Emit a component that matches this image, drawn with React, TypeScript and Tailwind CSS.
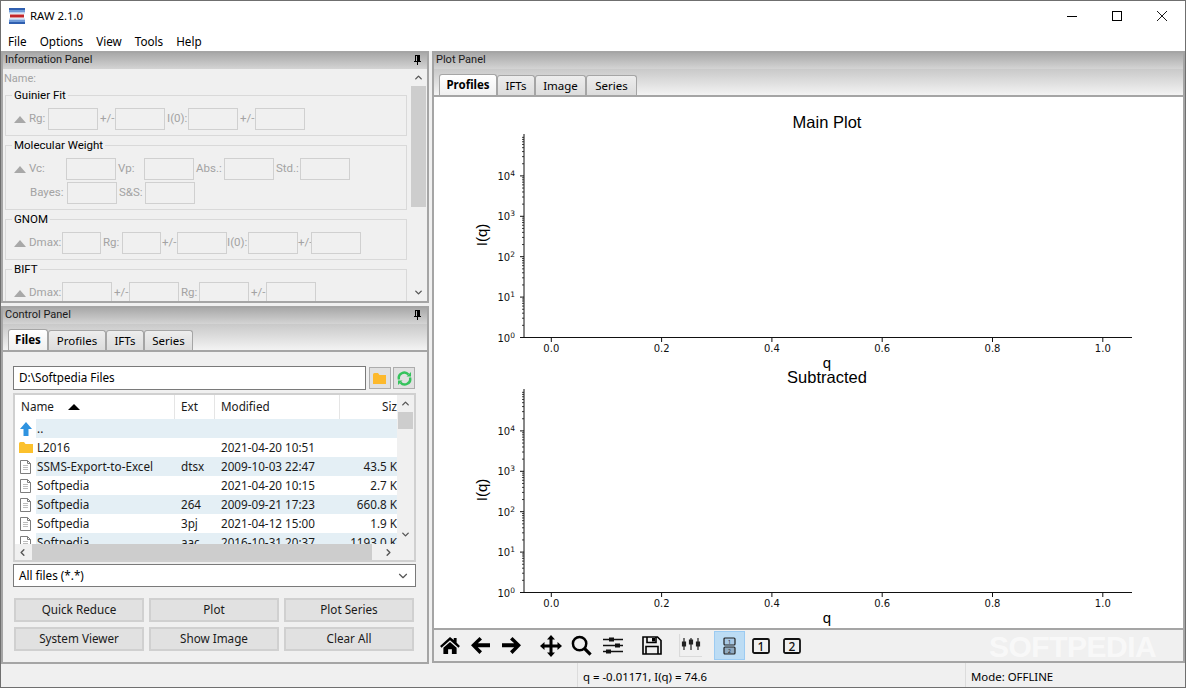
import { ChevronDown, ChevronLeft, ChevronRight, ChevronUp } from 'lucide-react';
import { ReactNode } from 'react';

const UI_FONT = "font-['Noto_Sans','Open_Sans',sans-serif]";

function PinIcon() {
  return (
    <svg width="7" height="10" viewBox="0 0 7 10" className="mb-[2px]">
      <path d="M1 0H6V6H7V7H4V10H3V7H0V6H1ZM2 1V6H3V1Z" fill="#000" />
    </svg>
  );
}

function DockHeader({ title, pin = true }: { title: string; pin?: boolean }) {
  return (
    <div className="flex h-4 shrink-0 items-center justify-between bg-gradient-to-b from-[#a9a9a9] to-[#d4d4d4] pl-[2px] pr-[6px] font-['Roboto',sans-serif] text-[11px] leading-none text-[#1a1a1a]">
      <span className="mb-[3px]">{title}</span>
      {pin && <PinIcon />}
    </div>
  );
}

function Tabs({ tabs, bold }: { tabs: [string, number][]; bold: string }) {
  return (
    <div className="flex h-7 shrink-0 items-end border-b-2 border-[#a5a5a5] bg-gradient-to-b from-[#c9c9c9] to-[#f3f3f3] pl-[5px]">
      {tabs.map(([t, w]) => (
        <div
          key={t}
          style={{ width: w }}
          className={
            t === bold
              ? 'flex h-[21px] items-center justify-center rounded-t-[3px] border border-b-0 border-[#a5a5a5] bg-gradient-to-b from-white to-[#f0f0f0] text-[11.5px] font-bold'
              : 'flex h-[20px] items-center justify-center rounded-t-[3px] border border-b-0 border-[#a5a5a5] bg-gradient-to-b from-[#ededed] to-[#dcdcdc] text-[11.5px]'
          }
        >
          {t}
        </div>
      ))}
    </div>
  );
}

function Tri() {
  return <span className="mr-[3px] h-0 w-0 border-x-[6.5px] border-b-[7px] border-x-transparent border-b-[#a8a8a8]" />;
}

function Lbl({ w, children }: { w?: number; children: ReactNode }) {
  return (
    <span style={{ width: w }} className="shrink-0 font-['Roboto',sans-serif] text-[11.5px] leading-none text-[#a3a3a3]">
      {children}
    </span>
  );
}

function Box({ w = 50, gap = 2 }: { w?: number; gap?: number }) {
  return <span style={{ width: w, marginRight: gap }} className="h-[22px] shrink-0 border border-[#d0d0d0] bg-[#f0f0f0]" />;
}

function Group({ title, children }: { title: string; children: ReactNode }) {
  return (
    <div className="relative mb-[9px] ml-[2px] mr-[3px] border border-[#d9d9d9] pb-[5px] pl-2 pt-[12px]">
      <span className="absolute -top-[9px] left-[6px] bg-[#f0f0f0] px-[2px] font-['Roboto',sans-serif] text-[11.5px] leading-4 text-black">{title}</span>
      {children}
    </div>
  );
}

function InfoPanel() {
  return (
    <div className="flex h-[252px] shrink-0 flex-col border-2 border-[#a5a5a5]">
      <DockHeader title="Information Panel" />
      <div className="flex min-h-0 flex-1">
        <div className="min-w-0 flex-1 overflow-hidden">
          <div className="mb-[10px] pl-px pt-1 font-['Roboto',sans-serif] text-[11px] leading-3 text-[#a3a3a3]">Name:</div>
          <Group title="Guinier Fit">
            <div className="flex items-center">
              <Tri />
              <Lbl w={19}>Rg:</Lbl>
              <Box />
              <Lbl w={15}>+/-</Lbl>
              <Box />
              <Lbl w={21}>I(0):</Lbl>
              <Box />
              <Lbl w={15}>+/-</Lbl>
              <Box />
            </div>
          </Group>
          <Group title="Molecular Weight">
            <div className="flex items-center">
              <Tri />
              <Lbl w={37}>Vc:</Lbl>
              <Box />
              <Lbl w={26}>Vp:</Lbl>
              <Box />
              <Lbl w={28}>Abs.:</Lbl>
              <Box />
              <Lbl w={24}>Std.:</Lbl>
              <Box />
            </div>
            <div className="mt-0.5 flex items-center pl-4">
              <Lbl w={37}>Bayes:</Lbl>
              <Box />
              <Lbl w={26}>S&amp;S:</Lbl>
              <Box />
            </div>
          </Group>
          <Group title="GNOM">
            <div className="flex items-center">
              <Tri />
              <Lbl w={33}>Dmax:</Lbl>
              <Box w={39} />
              <Lbl w={19}>Rg:</Lbl>
              <Box w={39} gap={1} />
              <Lbl w={15}>+/-</Lbl>
              <Box gap={0} />
              <Lbl w={21}>I(0):</Lbl>
              <Box gap={0} />
              <Lbl w={13}>+/-</Lbl>
              <Box />
            </div>
          </Group>
          <Group title="BIFT">
            <div className="flex items-center">
              <Tri />
              <Lbl w={33}>Dmax:</Lbl>
              <Box />
              <Lbl w={15}>+/-</Lbl>
              <Box />
              <Lbl w={18}>Rg:</Lbl>
              <Box />
              <Lbl w={15}>+/-</Lbl>
              <Box />
            </div>
          </Group>
        </div>
        <div className="flex w-[17px] shrink-0 flex-col items-center bg-[#f0f0f0]">
          <ChevronUp size={11} strokeWidth={3} className="mt-[3px] h-[11px] shrink-0 text-[#555]" />
          <div className="mt-[3px] h-[121px] w-[15px] bg-[#cdcdcd]" />
          <div className="flex-1" />
          <ChevronDown size={11} strokeWidth={3} className="mb-[3px] shrink-0 text-[#555]" />
        </div>
      </div>
    </div>
  );
}

const FILES: [string, string, string, string, 'up' | 'folder' | 'file'][] = [
  ['..', '', '', '', 'up'],
  ['L2016', '', '2021-04-20 10:51', '', 'folder'],
  ['SSMS-Export-to-Excel', 'dtsx', '2009-10-03 22:47', '43.5 K', 'file'],
  ['Softpedia', '', '2021-04-20 10:15', '2.7 K', 'file'],
  ['Softpedia', '264', '2009-09-21 17:23', '660.8 K', 'file'],
  ['Softpedia', '3pj', '2021-04-12 15:00', '1.9 K', 'file'],
  ['Softpedia', 'aac', '2016-10-31 20:37', '1193.0 K', 'file'],
];

function FileIcon({ kind }: { kind: 'up' | 'folder' | 'file' }) {
  if (kind === 'up') {
    return (
      <svg width="12" height="14" viewBox="0 0 12 14">
        <path d="M6 0 12 7H8.5V14H3.5V7H0Z" fill="#2f93e0" />
      </svg>
    );
  }
  if (kind === 'folder') {
    return (
      <svg width="14" height="11" viewBox="0 0 14 11">
        <path d="M0 1.5Q0 0 1.5 0H5L6.5 2H14V11H0Z" fill="#fcc12d" />
      </svg>
    );
  }
  return (
    <svg width="11" height="14" viewBox="0 0 11 14" fill="none" stroke="#7d7d7d">
      <path d="M.5.5H7.5L10.5 3.5V13.5H.5Z" fill="#fff" />
      <path d="M7.5.5V3.5H10.5" />
      <path d="M3 5.5H8M3 7.5H8M3 9.5H8" stroke="#bdbdbd" />
    </svg>
  );
}

function FileList() {
  return (
    <div className="ml-[10px] mr-[11px] mt-[3px] h-[169px] shrink-0 border-2 border-[#d0d0d0] bg-white">
      <div className="flex h-full">
        <div className="flex min-w-0 flex-1 flex-col">
          <div className="min-h-0 flex-1 overflow-hidden text-[11.7px] leading-none text-[#1a1a1a]">
            <div className="flex h-6 items-center">
              <div className="flex h-full w-[160px] items-center border-r border-[#e5e5e5] pl-[6px]">
                Name
                <span className="ml-[14px] h-0 w-0 border-x-[6.5px] border-b-[6px] border-x-transparent border-b-black" />
              </div>
              <div className="flex h-full w-[40px] items-center border-r border-[#e5e5e5] pl-[6px]">Ext</div>
              <div className="flex h-full w-[125px] items-center border-r border-[#e5e5e5] pl-[6px]">Modified</div>
              <div className="flex h-full flex-1 items-center justify-end overflow-hidden">Siz</div>
            </div>
            {FILES.map(([name, ext, date, size, kind], i) => (
              <div key={i} className="flex h-[19px] items-center">
                <div className="flex h-full w-[21px] shrink-0 items-center justify-center bg-white">
                  <FileIcon kind={kind} />
                </div>
                <div className={i % 2 === 0 ? 'flex h-full flex-1 items-center bg-[#e4eff5]' : 'flex h-full flex-1 items-center'}>
                  <span className="w-[145px] shrink-0 pl-px">{name}</span>
                  <span className="w-[40px] shrink-0">{ext}</span>
                  <span className="w-[110px] shrink-0">{date}</span>
                  <span className="flex-1 text-right">{size}</span>
                </div>
              </div>
            ))}
          </div>
          <div className="flex h-[16px] shrink-0 items-center bg-[#f0f0f0]">
            <ChevronLeft size={11} strokeWidth={3} className="mx-[2px] shrink-0 text-[#555]" />
            <div className="ml-[2px] h-full w-[340px] bg-[#cdcdcd]" />
            <div className="flex-1" />
            <ChevronRight size={11} strokeWidth={3} className="mr-[3px] shrink-0 text-[#555]" />
          </div>
        </div>
        <div className="flex w-[17px] shrink-0 flex-col items-center bg-[#f0f0f0]">
          <ChevronUp size={11} strokeWidth={3} className="mt-[3px] shrink-0 text-[#555]" />
          <div className="mt-[3px] h-[17px] w-[15px] bg-[#cdcdcd]" />
          <div className="flex-1" />
          <ChevronDown size={11} strokeWidth={3} className="mb-[20px] shrink-0 text-[#555]" />
        </div>
      </div>
    </div>
  );
}

function Btn({ children }: { children: ReactNode }) {
  return (
    <div className="flex h-6 w-[130px] items-center justify-center border-2 border-[#d0d0d0] bg-[#e1e1e1] text-[11.7px] leading-none text-[#1a1a1a]">
      {children}
    </div>
  );
}

function ControlPanel() {
  return (
    <div className="flex h-[358px] shrink-0 flex-col border-2 border-[#a5a5a5]">
      <DockHeader title="Control Panel" />
      <Tabs
        bold="Files"
        tabs={[
          ['Files', 40],
          ['Profiles', 58],
          ['IFTs', 38],
          ['Series', 49],
        ]}
      />
      <div className="flex min-h-0 flex-1 flex-col">
        <div className="ml-[10px] mr-[12px] mt-[14px] flex items-center">
          <div className="flex h-6 flex-1 items-center border border-[#7a7a7a] bg-white pl-[5px] text-[11.7px] leading-none">D:\Softpedia Files</div>
          <div className="ml-[3px] flex h-[22px] w-[22px] items-center justify-center border border-[#adadad] bg-[#e1e1e1]">
            <svg width="14" height="11" viewBox="0 0 14 11">
              <path d="M0 1.5Q0 0 1.5 0H5L6.5 2H13V11H0Z" fill="#fdb92c" />
            </svg>
          </div>
          <div className="ml-0.5 flex h-[22px] w-[22px] items-center justify-center border border-[#adadad] bg-[#e1e1e1]">
            <svg width="15" height="15" viewBox="0 0 15 15" fill="none" stroke="#35c35c" strokeWidth="2.4">
              <path d="M2 8.5A5.5 5.5 0 0 1 11.5 3.5M13 6.5A5.5 5.5 0 0 1 3.5 11.5" />
              <path d="M9.5 5.5H14V1ZM5.5 9.5H1V14Z" fill="#35c35c" stroke="none" />
            </svg>
          </div>
        </div>
        <FileList />
        <div className="ml-[10px] mr-[11px] mt-0.5 flex h-[23px] items-center justify-between border border-[#7a7a7a] bg-white pl-[5px] pr-[5px] text-[11.7px] leading-none">
          All files (*.*)
          <ChevronDown size={14} className="text-[#555]" />
        </div>
        <div className="mt-[11px] grid grid-cols-[130px_130px_130px] gap-x-[5px] gap-y-[5px] pl-[11px]">
          <Btn>Quick Reduce</Btn>
          <Btn>Plot</Btn>
          <Btn>Plot Series</Btn>
          <Btn>System Viewer</Btn>
          <Btn>Show Image</Btn>
          <Btn>Clear All</Btn>
        </div>
      </div>
    </div>
  );
}

const Y_DECADES = [0, 1, 2, 3, 4];
const X_TICKS = ['0.0', '0.2', '0.4', '0.6', '0.8', '1.0'];
const TICK_FONT = "'DejaVu Sans', sans-serif";

// log minor ticks: 2..9 within each decade, up to the top of the spine
function minorTicks(y0: number, dec: number) {
  const out: number[] = [];
  for (let d = 0; d < 5; d++) {
    for (let m = 2; m <= 9; m++) out.push(y0 - (d + Math.log10(m)) * dec);
  }
  return out;
}

function LogPlot({ title }: { title: string }) {
  const y0 = 240.5;
  const dec = 40.4;
  const xs = X_TICKS.map((_, i) => 117.3 + i * 110.3);
  return (
    <svg width="750" height="265" viewBox="0 0 750 265" className="block overflow-visible font-['Liberation_Sans',sans-serif]">
      <text x="393" y="31" textAnchor="middle" fontSize="16.5" fill="#000">
        {title}
      </text>
      <path d="M90 37V240.5H698" fill="none" stroke="#111" />
      {Y_DECADES.map((d) => (
        <g key={d}>
          <path d={`M86 ${y0 - d * dec}H90`} stroke="#111" />
          <text x="81" y={y0 - d * dec + 4} textAnchor="end" fontSize="10" fontFamily={TICK_FONT} fill="#111">
            10
            <tspan dy="-4" fontSize="7.5">
              {d}
            </tspan>
          </text>
        </g>
      ))}
      {minorTicks(y0, dec)
        .filter((y) => y > 37)
        .map((y) => (
          <path key={y} d={`M88 ${y}H90`} stroke="#111" strokeWidth="0.8" />
        ))}
      {xs.map((x, i) => (
        <g key={x}>
          <path d={`M${x} 241V245`} stroke="#111" />
          <text x={x} y="255" textAnchor="middle" fontSize="10" fontFamily={TICK_FONT} fill="#111">
            {X_TICKS[i]}
          </text>
        </g>
      ))}
      <text x="393" y="271" textAnchor="middle" fontSize="15">
        q
      </text>
      <text transform="rotate(-90 53 138)" x="53" y="138" textAnchor="middle" fontSize="15">
        I(q)
      </text>
    </svg>
  );
}

function ToolIcon({ children, active }: { children: ReactNode; active?: boolean }) {
  return (
    <div className={active ? 'flex h-[29px] w-[31px] items-center justify-center border border-[#9ccbf2] bg-[#bcdcf4]' : 'flex h-7 w-[31px] items-center justify-center'}>
      {children}
    </div>
  );
}

function Toolbar() {
  return (
    <div className="relative flex h-[33px] shrink-0 items-center border-t-2 border-[#a5a5a5]">
      <ToolIcon>
        <svg width="20" height="17" viewBox="0 0 21 18">
          <path d="M10.5 0 0 9.5 1.5 11.5 10.5 3.5 19.5 11.5 21 9.5 17.5 6V1H14.5V3.3Z" />
          <path d="M3.5 11.5 10.5 5.2 17.5 11.5V18H12.5V13H8.5V18H3.5Z" />
        </svg>
      </ToolIcon>
      <ToolIcon>
        <svg width="19" height="17" viewBox="0 0 19 17">
          <path d="M8.5 0 11 2.5 6.8 6.3H19V10.3H6.8L11 14.2 8.5 17 0 8.3Z" />
        </svg>
      </ToolIcon>
      <ToolIcon>
        <svg width="19" height="17" viewBox="0 0 19 17">
          <path d="M10.5 0 8 2.5 12.2 6.3H0V10.3H12.2L8 14.2 10.5 17 19 8.3Z" />
        </svg>
      </ToolIcon>
      <div className="w-2" />
      <ToolIcon>
        <svg width="22" height="22" viewBox="0 0 22 22">
          <path d="M11 0 15 4.5H12.5V9.5H17.5V7L22 11 17.5 15V12.5H12.5V17.5H15L11 22 7 17.5H9.5V12.5H4.5V15L0 11 4.5 7V9.5H9.5V4.5H7Z" />
        </svg>
      </ToolIcon>
      <ToolIcon>
        <svg width="21" height="21" viewBox="0 0 22 22" fill="none" stroke="#000">
          <circle cx="9" cy="9" r="7" strokeWidth="2.6" />
          <path d="M14 14 20.5 20.5" strokeWidth="3.4" />
        </svg>
      </ToolIcon>
      <ToolIcon>
        <svg width="20" height="17" viewBox="0 0 20 17" fill="none" stroke="#111" strokeWidth="1.6">
          <path d="M0 2.5H20M0 8.5H20M0 14.5H20" />
          <path d="M6 .5H11V4.5H6ZM12 6.5H17V10.5H12ZM3 12.5H8V16.5H3Z" fill="#111" stroke="none" />
        </svg>
      </ToolIcon>
      <div className="w-2" />
      <ToolIcon>
        <svg width="20" height="19" viewBox="0 0 20 19" fill="none" stroke="#000" strokeWidth="1.6">
          <path d="M1 1H15.5L19 4.5V18H1Z" />
          <path d="M5 1V6.5H14V1" />
          <path d="M4 18V10.5H16V18" />
          <path d="M10 2H13V5.5H10Z" fill="#000" stroke="none" />
        </svg>
      </ToolIcon>
      <div className="w-2" />
      <ToolIcon>
        <svg width="23" height="23" viewBox="0 0 23 23" fill="none" stroke="#222" strokeWidth="1.2">
          <path d="M.5 .5V22.5H23" stroke="#c4c4c4" strokeDasharray="1 1" />
          <path d="M5 4V16M12 4V16M19 4V16" />
          <path d="M3.5 8H6.5V12H3.5ZM10.5 6H13.5V10H10.5ZM17.5 8H20.5V12H17.5Z" fill="#222" />
        </svg>
      </ToolIcon>
      <div className="w-2" />
      <ToolIcon active>
        <svg width="13" height="18" viewBox="0 0 13 18" fill="none">
          <rect x="1" y="1" width="11" height="7" rx="1" stroke="#222" strokeWidth="1.2" fill="#a8c8e4" />
          <rect x="1" y="10" width="11" height="7" rx="1" stroke="#222" strokeWidth="1.2" fill="#8fa9bf" />
          <text x="6.5" y="6.8" fontSize="5" textAnchor="middle" fill="#222">
            1
          </text>
          <text x="6.5" y="15.8" fontSize="5" textAnchor="middle" fill="#222">
            2
          </text>
        </svg>
      </ToolIcon>
      <ToolIcon>
        <svg width="18" height="16" viewBox="0 0 18 16" fill="none">
          <rect x="1" y="1" width="16" height="14" rx="1.5" stroke="#111" strokeWidth="1.8" />
          <text x="9" y="12.8" fontSize="12" fontWeight="500" textAnchor="middle" fill="#111">
            1
          </text>
        </svg>
      </ToolIcon>
      <ToolIcon>
        <svg width="18" height="16" viewBox="0 0 18 16" fill="none">
          <rect x="1" y="1" width="16" height="14" rx="1.5" stroke="#111" strokeWidth="1.8" />
          <text x="9" y="12.8" fontSize="12" fontWeight="500" textAnchor="middle" fill="#111">
            2
          </text>
        </svg>
      </ToolIcon>
      <span className="absolute left-[555px] top-[1px] font-['Liberation_Sans',sans-serif] text-[30px] font-bold leading-[31px] tracking-[-0.5px] text-white/60">
        SOFTPEDIA
      </span>
    </div>
  );
}

function PlotPanel() {
  return (
    <div className="flex min-w-0 flex-1 flex-col border-2 border-[#a5a5a5]">
      <DockHeader title="Plot Panel" pin={false} />
      <Tabs
        bold="Profiles"
        tabs={[
          ['Profiles', 58],
          ['IFTs', 38],
          ['Image', 51],
          ['Series', 51],
        ]}
      />
      <div className="min-h-0 flex-1 overflow-hidden bg-white">
        <LogPlot title="Main Plot" />
        <div className="-mt-[10px]">
          <LogPlot title="Subtracted" />
        </div>
      </div>
      <Toolbar />
    </div>
  );
}

export default function App() {
  return (
    <div className={`${UI_FONT} flex h-[688px] w-[1186px] flex-col overflow-hidden border border-[#6f6f6f] bg-[#f0f0f0] text-black`}>
      <div className="flex h-[30px] shrink-0 items-center bg-white">
        <svg width="16" height="16" viewBox="0 0 16 16" className="ml-[8px]">
          <rect width="16" height="16" fill="#fff" />
          <rect width="16" height="2" fill="#2f5fb0" />
          <rect y="2" width="16" height="2" fill="#6f9ad8" />
          <rect y="4" width="16" height="1.5" fill="#b9cfee" />
          <rect x="1" y="6.5" width="14" height="3" fill="#c2272d" />
          <rect y="10.5" width="16" height="1.5" fill="#b9cfee" />
          <rect y="12" width="16" height="2" fill="#6f9ad8" />
          <rect y="14" width="16" height="2" fill="#2f5fb0" />
        </svg>
        <span className="ml-[5px] text-[11.4px] leading-none">RAW 2.1.0</span>
        <div className="ml-auto flex">
          <div className="flex h-[30px] w-[45px] items-center justify-center">
            <span className="h-px w-[10px] bg-black" />
          </div>
          <div className="flex h-[30px] w-[45px] items-center justify-center">
            <span className="h-[10px] w-[10px] border border-black" />
          </div>
          <div className="flex h-[30px] w-[46px] items-center justify-center">
            <svg width="10" height="10" viewBox="0 0 10 10" stroke="#000" strokeWidth="0.9">
              <path d="M0 0 10 10M10 0 0 10" />
            </svg>
          </div>
        </div>
      </div>
      <div className="flex h-[20px] shrink-0 items-center gap-[13px] bg-white pl-[7px] pt-0.5 text-[11.7px] leading-none">
        <span>File</span>
        <span>Options</span>
        <span>View</span>
        <span>Tools</span>
        <span>Help</span>
      </div>
      <div className="flex min-h-0 flex-1 gap-[3px]">
        <div className="flex w-[428px] shrink-0 flex-col gap-[3px]">
          <InfoPanel />
          <ControlPanel />
        </div>
        <PlotPanel />
      </div>
      <div className="flex h-[24px] shrink-0 items-center text-[11.4px] leading-none">
        <div className="h-full w-[577px] border-r border-[#dcdcdc]" />
        <div className="flex h-full w-[388px] items-center border-r border-[#dcdcdc] pl-[5px] pt-[3px]">q = -0.01171, I(q) = 74.6</div>
        <div className="pl-[5px] pt-[3px]">Mode: OFFLINE</div>
      </div>
    </div>
  );
}
